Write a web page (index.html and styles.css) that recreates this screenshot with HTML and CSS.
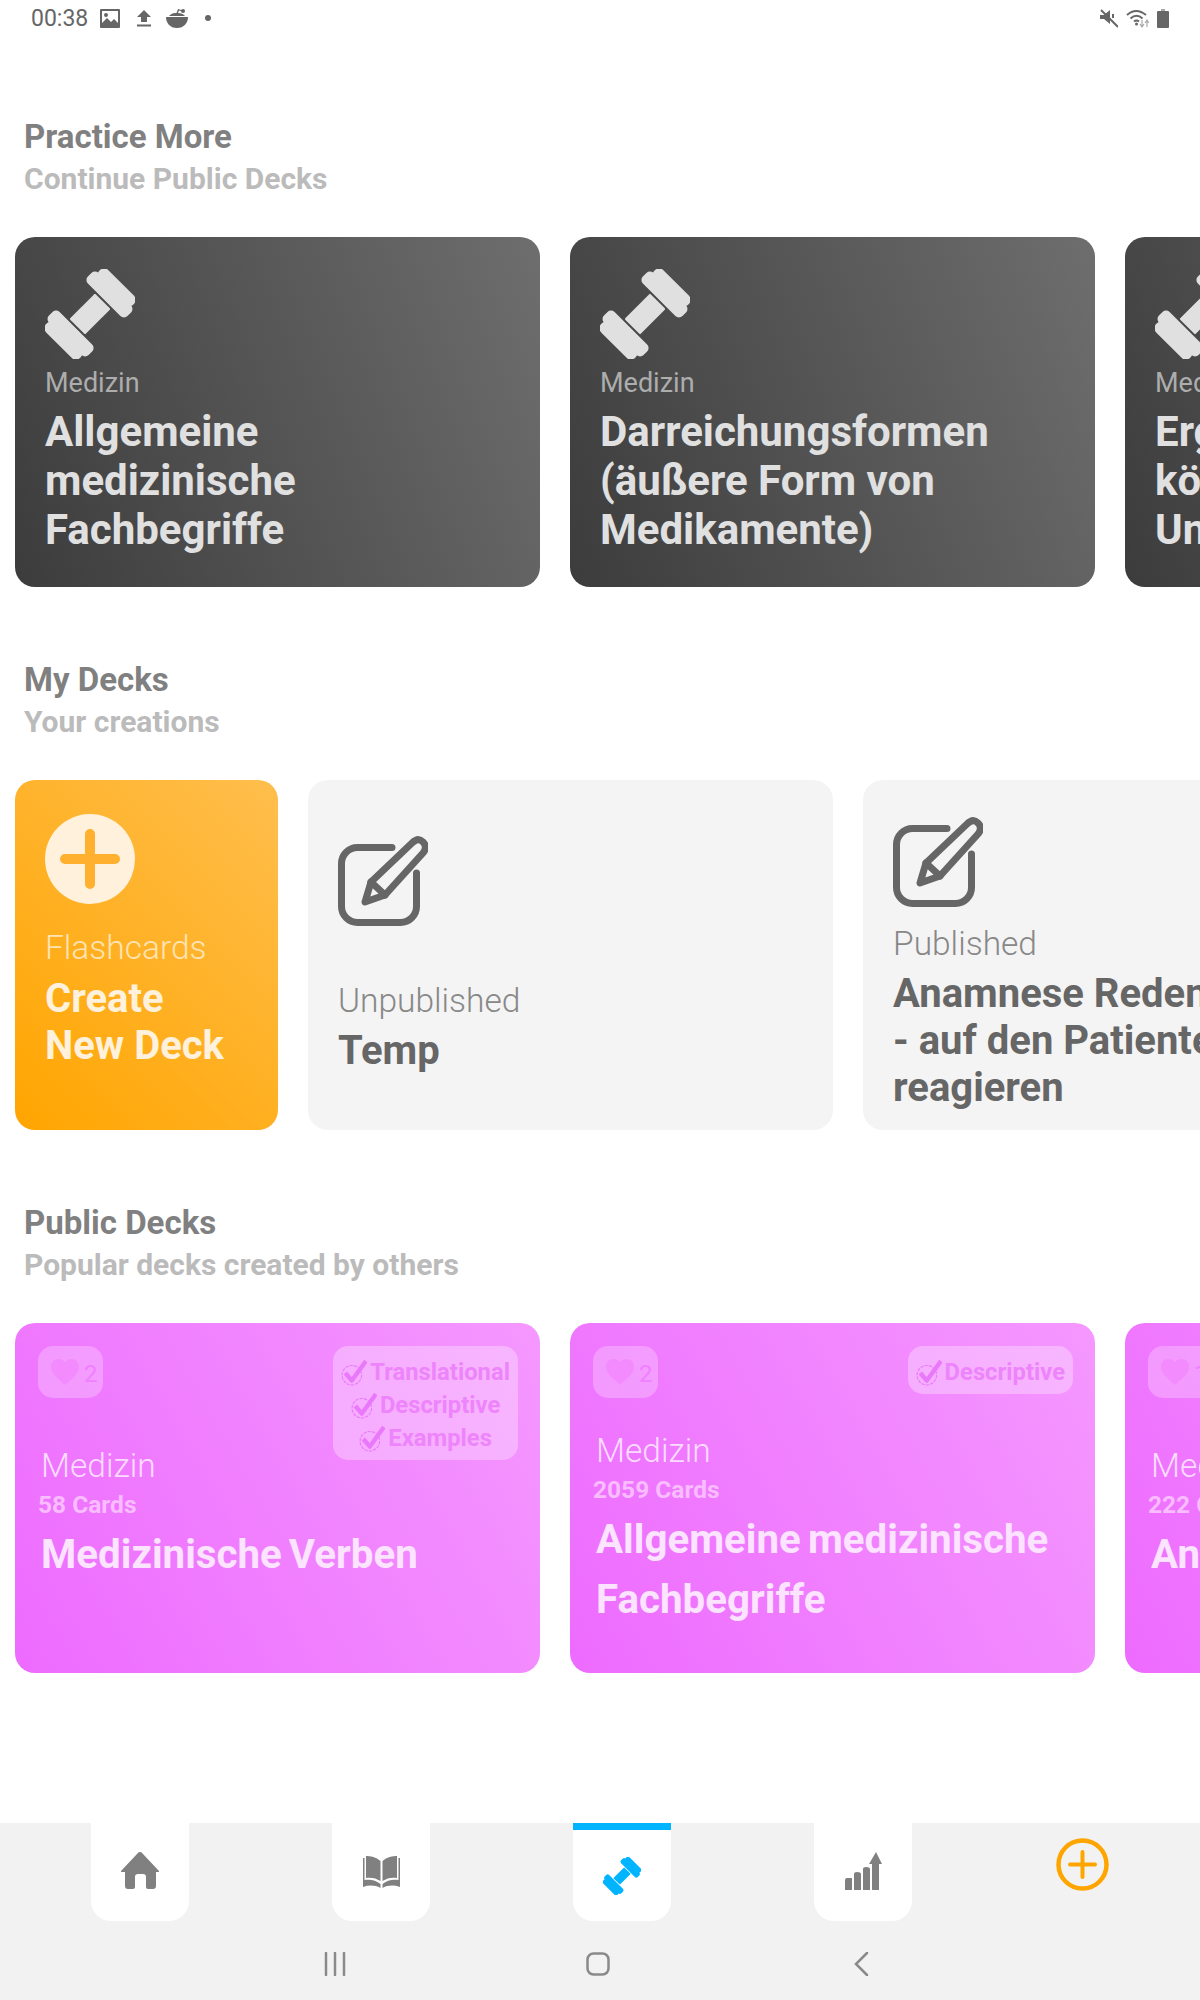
FILE: index.html
```html
<!DOCTYPE html>
<html lang="en">
<head>
    <meta charset="UTF-8">
    <meta name="viewport" content="width=device-width, initial-scale=1.0">
    <title>Decks</title>
    <link rel="stylesheet" href="styles.css">
</head>
<body>
    <svg class="defs" width="0" height="0">
        <symbol id="dumbbell" viewBox="0 0 90 90">
            <g transform="rotate(-45 45 45)" fill="currentColor">
                <rect x="27" y="34" width="36" height="22" rx="1"/>
                <rect x="65" y="17" width="15" height="56" rx="5"/>
                <rect x="76" y="21" width="13" height="48" rx="6"/>
                <rect x="10" y="17" width="15" height="56" rx="5"/>
                <rect x="1" y="21" width="13" height="48" rx="6"/>
            </g>
        </symbol>
        <symbol id="edit" viewBox="0 0 90 90">
            <g fill="none" stroke="currentColor" stroke-width="7" stroke-linecap="round" stroke-linejoin="round">
                <path d="M54 11.5H19.5a16 16 0 0 0-16 16V70.5a16 16 0 0 0 16 16H62.5a16 16 0 0 0 16-16V37"/>
                <path d="M74 7Q80 1 85 6Q90 11 85 17L47 59L27 66L33 46Z"/>
                <path d="M33 46L47 59"/>
            </g>
        </symbol>
        <symbol id="plus" viewBox="0 0 90 90">
            <circle cx="45" cy="45" r="45" fill="#fff1dc"/>
            <path d="M45 20V70M20 45H70" stroke="#ffb02e" stroke-width="10" stroke-linecap="round"/>
        </symbol>
        <symbol id="heart" viewBox="0 0 26 24">
            <path fill="currentColor" d="M13 24C5 17 0 13 0 7C0 3 3 0 7 0C9.500 0 11.700 1.200 13 3.200C14.300 1.200 16.500 0 19 0C23 0 26 3 26 7C26 13 21 17 13 24Z"/>
        </symbol>
        <symbol id="check" viewBox="0 0 24 24">
            <circle cx="10" cy="14" r="9" fill="none" stroke="currentColor" stroke-width="1" stroke-dasharray="3 1"/>
            <path d="M4 12L10 19L23 1" fill="none" stroke="currentColor" stroke-width="4" stroke-linejoin="round"/>
        </symbol>
    </svg>

    <div class="status-bar">
        <span class="clock">00:38</span>
        <svg class="status-icon first" width="20" height="19" viewBox="0 0 20 19"><path fill="#666" d="M1 0H19Q20 0 20 1V18Q20 19 19 19H1Q0 19 0 18V1Q0 0 1 0ZM2 2V14L7 9L11 13L14 10L18 14V2ZM6 4A2 2 0 1 1 6 8A2 2 0 1 1 6 4Z"/></svg>
        <svg class="status-icon" width="16" height="17" viewBox="0 0 16 17"><path fill="#666" d="M8 0L15 7H11V12H5V7H1ZM1 14.500H15V16.500H1Z"/></svg>
        <svg class="status-icon" width="22" height="19" viewBox="0 0 22 19"><path fill="#666" d="M0 8H22C22 14 18 19 11 19C4 19 0 14 0 8ZM3 7C5 4.500 8 4 10.500 4L12 0L16 1.200V2.400L13 1.600L12 4.100C15 4.300 17.500 5 19 7Z"/><circle cx="17" cy="2" r="2" fill="#666"/></svg>
        <span class="status-dot"></span>
        <span class="status-right">
            <svg width="18" height="19" viewBox="0 0 18 19"><path fill="#666" d="M0 6H4L10 1V15L4 10H0Z"/><path d="M1 1L18 18" stroke="#666" stroke-width="2"/><path d="M13 5L13 9" stroke="#666" stroke-width="2"/></svg>
            <svg width="23" height="19" viewBox="0 0 23 19"><g fill="none" stroke="#666" stroke-width="2"><path d="M1 6Q10 -2 20 6"/><path d="M4.500 9.500Q10.500 4 16.500 9.500"/><path d="M8 12.500Q10.500 10.500 13 12.500"/></g><circle cx="10.500" cy="15" r="1.500" fill="#666"/><path d="M16 11V17M14 15L16 18L18 15M21 18V12M19 14L21 11L23 14" stroke="#aaa" stroke-width="1.200" fill="none"/></svg>
            <svg width="12" height="19" viewBox="0 0 12 19"><path fill="#aaa" d="M4 0H8V2H4Z"/><path fill="#666" d="M1 2H11Q12 2 12 3V18Q12 19 11 19H1Q0 19 0 18V3Q0 2 1 2Z"/></svg>
        </span>
    </div>

    <main class="content">
        <section class="section">
            <h2 class="section-title">Practice More</h2>
            <p class="section-sub">Continue Public Decks</p>
            <div class="deck-row">
                <div class="deck deck-dark">
                    <svg class="deck-icon"><use href="#dumbbell"/></svg>
                    <div class="deck-label">Medizin</div>
                    <div class="deck-name">Allgemeine<br>medizinische<br>Fachbegriffe</div>
                </div>
                <div class="deck deck-dark">
                    <svg class="deck-icon"><use href="#dumbbell"/></svg>
                    <div class="deck-label">Medizin</div>
                    <div class="deck-name">Darreichungsformen<br>(äußere Form von<br>Medikamente)</div>
                </div>
                <div class="deck deck-dark">
                    <svg class="deck-icon"><use href="#dumbbell"/></svg>
                    <div class="deck-label">Medizin</div>
                    <div class="deck-name">Ergebnisse<br>können<br>Untersuchungen</div>
                </div>
            </div>
        </section>

        <section class="section">
            <h2 class="section-title">My Decks</h2>
            <p class="section-sub">Your creations</p>
            <div class="deck-row">
                <div class="deck deck-create">
                    <svg class="deck-icon"><use href="#plus"/></svg>
                    <div class="deck-label">Flashcards</div>
                    <div class="deck-name">Create<br>New Deck</div>
                </div>
                <div class="deck deck-mine deck-unpublished">
                    <svg class="deck-icon"><use href="#edit"/></svg>
                    <div class="deck-label">Unpublished</div>
                    <div class="deck-name">Temp</div>
                </div>
                <div class="deck deck-mine deck-published">
                    <svg class="deck-icon"><use href="#edit"/></svg>
                    <div class="deck-label">Published</div>
                    <div class="deck-name">Anamnese Reden<br>- auf den Patienten<br>reagieren</div>
                </div>
            </div>
        </section>

        <section class="section">
            <h2 class="section-title">Public Decks</h2>
            <p class="section-sub">Popular decks created by others</p>
            <div class="deck-row">
                <div class="deck deck-public">
                    <div class="likes"><svg class="heart"><use href="#heart"/></svg><span>2</span></div>
                    <div class="tags">
                        <div class="tag"><svg class="tick"><use href="#check"/></svg>Translational</div>
                        <div class="tag"><svg class="tick"><use href="#check"/></svg>Descriptive</div>
                        <div class="tag"><svg class="tick"><use href="#check"/></svg>Examples</div>
                    </div>
                    <div class="public-label">Medizin</div>
                    <div class="public-count">58 Cards</div>
                    <div class="public-name">Medizinische Verben</div>
                </div>
                <div class="deck deck-public deck-public-long">
                    <div class="likes"><svg class="heart"><use href="#heart"/></svg><span>2</span></div>
                    <div class="tags">
                        <div class="tag"><svg class="tick"><use href="#check"/></svg>Descriptive</div>
                    </div>
                    <div class="public-label">Medizin</div>
                    <div class="public-count">2059 Cards</div>
                    <div class="public-name">Allgemeine medizinische Fachbegriffe</div>
                </div>
                <div class="deck deck-public">
                    <div class="likes"><svg class="heart"><use href="#heart"/></svg><span>1</span></div>
                    <div class="public-label">Medizin</div>
                    <div class="public-count">222 Cards</div>
                    <div class="public-name">Anamnese</div>
                </div>
            </div>
        </section>
    </main>

    <footer class="footer">
        <nav class="tabs">
            <div class="tab">
                <svg width="38" height="38" viewBox="0 0 38 38"><path fill="currentColor" d="M19 0Q21 0 22 2L38 19V20H35V34Q35 37 32 37H27Q25 37 25 35V25Q25 22 22 22H17Q14 22 14 25V35Q14 37 12 37H7Q4 37 4 34V20H0V19L16 2Q17 0 19 0Z"/></svg>
            </div>
            <div class="tab">
                <svg width="37" height="33" viewBox="0 0 37 33"><path fill="currentColor" d="M2 1C8 1 13 2 17.500 6V26C13 23 8 22 3 23V1ZM35 1C29 1 24 2 19.500 6V26C24 23 29 22 34 23V1ZM0 3H1.500V25C7 24 13 25 17.500 29V33C12 30 6 30 0 32ZM37 3H35.500V25C30 24 24 25 19.500 29V33C25 30 31 30 37 32Z"/></svg>
            </div>
            <div class="tab tab-active">
                <svg width="38" height="38"><use href="#dumbbell"/></svg>
            </div>
            <div class="tab">
                <svg width="38" height="38" viewBox="0 0 38 38"><path fill="currentColor" d="M1 28Q1 26 3 26H8V38H1ZM10 22Q10 20 13 20Q17 20 17 22V38H10ZM19 17Q19 15 22 15Q26 15 26 17V38H19ZM28 12H25L32 0L38 12H35V38H28Z"/></svg>
            </div>
            <div class="tab-add">
                <svg width="53" height="53" viewBox="0 0 53 53"><circle cx="26.500" cy="26.500" r="24" fill="none" stroke="#ffa500" stroke-width="4.500"/><path d="M26.500 14V39M14 26.500H39" stroke="#ffa500" stroke-width="4" stroke-linecap="round"/></svg>
            </div>
        </nav>
        <div class="system-nav">
            <svg width="24" height="24" viewBox="0 0 24 24"><path d="M3 1V23M12 1V23M21 1V23" stroke="#8a8a8a" stroke-width="2.500" stroke-linecap="round"/></svg>
            <svg width="24" height="24" viewBox="0 0 24 24"><rect x="1.500" y="1.500" width="21" height="21" rx="6" fill="none" stroke="#8a8a8a" stroke-width="2.500"/></svg>
            <svg width="24" height="24" viewBox="0 0 24 24"><path d="M18 1L7 12L18 23" fill="none" stroke="#8a8a8a" stroke-width="2.500" stroke-linecap="round"/></svg>
        </div>
    </footer>
</body>
</html>
```

FILE: styles.css
```css
* {
    box-sizing: border-box;
}
body {
    margin: 0;
    width: 1200px;
    height: 2000px;
    overflow: hidden;
    display: flex;
    flex-direction: column;
    background-color: white;
    font-family: Roboto, "Liberation Sans", sans-serif;
}
.defs {
    position: absolute;
}

/* status bar */
.status-bar {
    height: 36px;
    flex: none;
    display: flex;
    align-items: center;
    padding: 0 31px;
    color: #666;
}
.clock {
    font-size: 23px;
    width: 69px;
}
.status-icon {
    margin-right: 14px;
}
.status-icon.first {
    margin-right: 16px;
}
.status-dot {
    width: 6px;
    height: 6px;
    margin-left: 3px;
    border-radius: 50%;
    background-color: #666;
}
.status-right {
    margin-left: auto;
    display: flex;
    gap: 8px;
}

/* sections */
.content {
    flex: 1;
    padding-top: 80px;
}
.section {
    margin-bottom: 72px;
}
.section-title {
    margin: 0;
    padding-left: 24px;
    font-size: 33px;
    line-height: 42px;
    font-weight: 700;
    color: #808080;
}
.section-sub {
    margin: 0 0 37px;
    padding-left: 24px;
    font-size: 30px;
    line-height: 42px;
    font-weight: 700;
    color: #bbb;
}
.deck-row {
    display: flex;
    gap: 30px;
    padding-left: 15px;
    overflow: hidden;
}
.deck {
    position: relative;
    flex: none;
    width: 525px;
    height: 350px;
    border-radius: 20px;
    padding: 32px 30px 0;
}
.deck-icon {
    display: block;
    width: 90px;
    height: 90px;
}

/* practice cards */
.deck-dark {
    background: linear-gradient(68deg, #3c3c3c, #6e6e6e);
    color: #e0e0e0;
}
.deck-dark .deck-label {
    margin-top: 8px;
    font-size: 27px;
    line-height: 32px;
    color: #adadad;
}
.deck-dark .deck-name {
    margin-top: 8px;
    font-size: 42px;
    line-height: 49px;
    font-weight: 700;
}

/* my decks */
.deck-create {
    width: 263px;
    padding-top: 34px;
    background: linear-gradient(45deg, #ffa500, #ffbe4d);
    color: #fff1dc;
}
.deck-create .deck-label {
    margin-top: 25px;
    font-size: 33.5px;
    line-height: 38px;
    font-weight: 300;
    color: #ffe3b3;
}
.deck-create .deck-name {
    margin-top: 8px;
    font-size: 40px;
    line-height: 47px;
    font-weight: 700;
}
.deck-mine {
    background-color: #f4f4f4;
    color: #666;
}
.deck-mine .deck-label {
    font-size: 33.5px;
    line-height: 38px;
    font-weight: 300;
    color: #888;
}
.deck-mine .deck-name {
    margin-top: 7px;
    font-size: 40px;
    line-height: 47px;
    font-weight: 700;
    white-space: nowrap;
}
.deck-unpublished {
    padding-top: 56px;
}
.deck-unpublished .deck-label {
    margin-top: 56px;
}
.deck-published {
    padding-top: 37px;
}
.deck-published .deck-label {
    margin-top: 18px;
}

/* public decks */
.deck-public {
    padding: 23px 23px 0;
    background: linear-gradient(60deg, #ed6bff, #f598ff);
    color: #fce3ff;
}
.likes {
    width: 65px;
    height: 52px;
    display: flex;
    align-items: center;
    padding-left: 13px;
    border-radius: 15px;
    background-color: rgba(255, 255, 255, 0.25);
    color: #f080ff;
}
.likes span {
    margin-left: 5px;
    margin-top: 4px;
    font-size: 24px;
}
.heart {
    width: 28px;
    height: 26px;
    color: #f38bff;
}
.tags {
    position: absolute;
    top: 23px;
    right: 22px;
    padding: 10px 8px 5px;
    border-radius: 15px;
    background-color: rgba(255, 255, 255, 0.3);
    color: #ee84fb;
}
.tag {
    display: flex;
    justify-content: center;
    align-items: center;
    gap: 3px;
    font-size: 23.8px;
    line-height: 33px;
    font-weight: 700;
}
.tick {
    width: 26px;
    height: 26px;
    color: #ea78fa;
}
.public-label {
    margin-top: 49px;
    padding-left: 3px;
    font-size: 33.5px;
    line-height: 38px;
    font-weight: 300;
    color: #fcdcff;
}
.public-count {
    margin-top: 5px;
    font-size: 24.5px;
    line-height: 30px;
    font-weight: 700;
    color: #f9bcff;
}
.public-name {
    margin-top: 5px;
    padding-left: 3px;
    font-size: 40.3px;
    line-height: 60px;
    font-weight: 700;
    word-spacing: -3px;
}
.deck-public-long .public-label {
    margin-top: 34px;
}

/* bottom navigation */
.footer {
    flex: none;
    height: 177px;
    background-color: #f2f2f2;
}
.tabs {
    display: flex;
    gap: 143px;
    padding-left: 91px;
}
.tab {
    position: relative;
    width: 98px;
    height: 98px;
    display: flex;
    justify-content: center;
    align-items: center;
    padding-bottom: 2px;
    border-radius: 0 0 20px 20px;
    background-color: white;
    color: #808080;
}
.tab-active {
    border-top: 7px solid #00b4ff;
    padding-bottom: 0;
    color: #00b4ff;
}
.tab-add {
    margin-left: 1px;
    padding-top: 15px;
}
.system-nav {
    display: flex;
    gap: 239px;
    padding: 31px 0 0 323px;
}
```
